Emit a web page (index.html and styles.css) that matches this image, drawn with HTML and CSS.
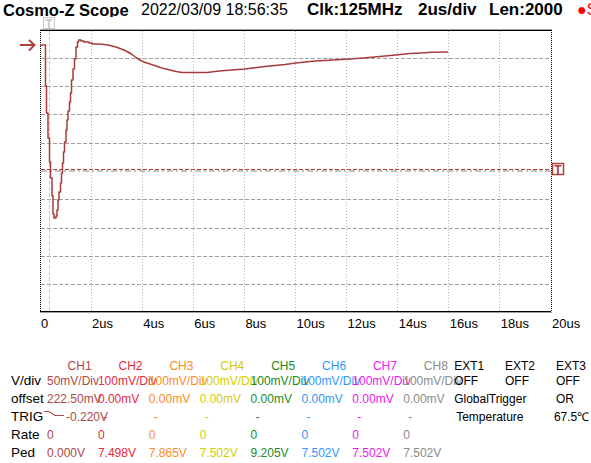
FILE: index.html
```html
<!DOCTYPE html>
<html lang="en">
<head>
  <meta charset="UTF-8">
  <title>Cosmo-Z Scope</title>
  <link rel="stylesheet" href="styles.css">
</head>
<body>
  <div class="topbar">
    <span class="title">Cosmo-Z Scope</span>
    <span class="date">2022/03/09 18:56:35</span>
    <span class="info clk">Clk:125MHz</span>
    <span class="info per-div">2us/div</span>
    <span class="info len">Len:2000</span>
    <span class="state">●Stop</span>
  </div>

  <svg class="scope" width="591" height="299" viewBox="0 17 591 299">
    <rect x="0" y="17" width="591" height="299" fill="#fff"/>

    <!-- time grid -->
    <g stroke="#b4b4b4" stroke-dasharray="1 2">
      <line x1="91.5" y1="31" x2="91.5" y2="311"/>
      <line x1="142.5" y1="31" x2="142.5" y2="311"/>
      <line x1="193.5" y1="31" x2="193.5" y2="311"/>
      <line x1="244.5" y1="31" x2="244.5" y2="311"/>
      <line x1="295.5" y1="31" x2="295.5" y2="311"/>
      <line x1="346.5" y1="31" x2="346.5" y2="311"/>
      <line x1="397.5" y1="31" x2="397.5" y2="311"/>
      <line x1="448.5" y1="31" x2="448.5" y2="311"/>
      <line x1="499.5" y1="31" x2="499.5" y2="311"/>
    </g>

    <!-- volt grid -->
    <g stroke="#a0a0a0" stroke-dasharray="4 2">
      <line x1="41" y1="58.5" x2="551" y2="58.5"/>
      <line x1="41" y1="86.5" x2="551" y2="86.5"/>
      <line x1="41" y1="114.5" x2="551" y2="114.5"/>
      <line x1="41" y1="143.5" x2="551" y2="143.5"/>
      <line x1="41" y1="199.5" x2="551" y2="199.5"/>
      <line x1="41" y1="228.5" x2="551" y2="228.5"/>
      <line x1="41" y1="256.5" x2="551" y2="256.5"/>
      <line x1="41" y1="284.5" x2="551" y2="284.5"/>
    </g>
    <line x1="41" y1="171" x2="551" y2="171" stroke="#c4c4c4" stroke-width="2" stroke-dasharray="6 3 2 3"/>

    <!-- trigger position and level -->
    <line x1="49.5" y1="31" x2="49.5" y2="311" stroke="#c8c8c8" stroke-dasharray="4 2"/>
    <line x1="41" y1="169.5" x2="551" y2="169.5" stroke="#b04040" stroke-dasharray="4 2"/>

    <!-- frame -->
    <line x1="40" y1="29.5" x2="552" y2="29.5" stroke="#a0a0a0"/>
    <line x1="40" y1="30.5" x2="551" y2="30.5" stroke="#000"/>
    <line x1="40" y1="311.5" x2="551" y2="311.5" stroke="#000"/>
    <line x1="40" y1="312.5" x2="552" y2="312.5" stroke="#a0a0a0"/>
    <line x1="40.5" y1="30" x2="40.5" y2="312" stroke="#000" stroke-dasharray="1 1"/>
    <line x1="551.5" y1="30" x2="551.5" y2="312" stroke="#000" stroke-dasharray="1 1"/>

    <!-- markers -->
    <rect x="43.5" y="17.5" width="11" height="11" fill="#fff" stroke="#c8c8c8"/>
    <text x="49" y="27.5" class="mark mark-time">T</text>
    <rect x="552.5" y="163.5" width="11" height="11" fill="#fff" stroke="#b04040" stroke-width="1.5"/>
    <text x="558" y="173.5" class="mark mark-level">T</text>
    <path d="M20 45 H34 M29 40 L34.5 45 L29 50.5" fill="none" stroke="#b04040" stroke-width="2"/>

    <!-- CH1 trace -->
    <polyline fill="none" stroke="#a83c3c" stroke-width="1.5" stroke-linejoin="round"
      points="40,45 45.5,45 45.5,86 46.5,86 46.5,113 48,113 48,138 49.5,138 49.5,162 50.5,162 50.5,178 52,178 52,196 53,196 53,214 54,214 54,218 56,218 56,216 57,216 57,210 58,210 58,200 59,200 59,192 60.5,192 60.5,183 61.5,183 61.5,173 62.5,173 62.5,163 63.5,163 63.5,152 64.5,152 64.5,142 66,142 66,130 67,130 67,120 68,120 68,111 69.5,111 69.5,102 70.5,102 70.5,93 71.5,93 71.5,80 73,80 73,69 74.5,69 74.5,59 76,59 76,47 77.5,47 77.5,42 78.5,42 78.5,40 81,40 81,41 84,41 84,42 89,42 89,43 92,43 92,44 100,44 108,45 112,46 116,47 120,48.5 124,50 128,52 132,54.5 136,57.5 140,60 144,62 150,64 156,66 162,68 170,70 176,71.5 182,72.5 195,72.5 207,72.5 215,71.5 225,70.5 235,69.8 245,69 255,67.8 265,66.5 275,65.5 285,64.5 296,63 305,62 315,61 325,60.5 337,59.7 350,59 360,58.3 372,57.3 385,56 398,54.8 410,53.5 420,53 432,52.3 448,52"/>
  </svg>

  <div class="axis">
    <span>0</span>
    <span>2us</span>
    <span>4us</span>
    <span>6us</span>
    <span>8us</span>
    <span>10us</span>
    <span>12us</span>
    <span>14us</span>
    <span>16us</span>
    <span>18us</span>
    <span>20us</span>
  </div>

  <div class="channels">
    <div class="row head">
      <span></span>
      <span class="ch1">CH1</span>
      <span class="ch2">CH2</span>
      <span class="ch3">CH3</span>
      <span class="ch4">CH4</span>
      <span class="ch5">CH5</span>
      <span class="ch6">CH6</span>
      <span class="ch7">CH7</span>
      <span class="ch8">CH8</span>
      <span class="ext">EXT1</span>
      <span class="ext">EXT2</span>
      <span class="ext">EXT3</span>
    </div>
    <div class="row">
      <span class="label">V/div</span>
      <span class="ch1">50mV/Div</span>
      <span class="ch2">100mV/Div</span>
      <span class="ch3">100mV/Div</span>
      <span class="ch4">100mV/Div</span>
      <span class="ch5">100mV/Div</span>
      <span class="ch6">100mV/Div</span>
      <span class="ch7">100mV/Div</span>
      <span class="ch8">100mV/Div</span>
      <span>OFF</span>
      <span>OFF</span>
      <span>OFF</span>
    </div>
    <div class="row">
      <span class="label">offset</span>
      <span class="ch1">222.50mV</span>
      <span class="ch2">0.00mV</span>
      <span class="ch3">0.00mV</span>
      <span class="ch4">0.00mV</span>
      <span class="ch5">0.00mV</span>
      <span class="ch6">0.00mV</span>
      <span class="ch7">0.00mV</span>
      <span class="ch8">0.00mV</span>
      <span>GlobalTrigger</span>
      <span></span>
      <span>OR</span>
    </div>
    <div class="row">
      <span class="label">TRIG</span>
      <span class="ch1 trig"><svg class="slope" width="22" height="8" viewBox="0 0 22 8"><polyline points="0,1.5 5,1.5 11,5.5 20,5.5" fill="none" stroke="#b04848" stroke-width="1.2"/></svg>-0.220V</span>
      <span class="ch2 none">-</span>
      <span class="ch3 none">-</span>
      <span class="ch4 none">-</span>
      <span class="ch5 none">-</span>
      <span class="ch6 none">-</span>
      <span class="ch7 none">-</span>
      <span class="ch8 none">-</span>
      <span class="temp">Temperature</span>
      <span></span>
      <span class="temp-value">67.5℃</span>
    </div>
    <div class="row">
      <span class="label">Rate</span>
      <span class="ch1">0</span>
      <span class="ch2">0</span>
      <span class="ch3">0</span>
      <span class="ch4">0</span>
      <span class="ch5">0</span>
      <span class="ch6">0</span>
      <span class="ch7">0</span>
      <span class="ch8">0</span>
    </div>
    <div class="row">
      <span class="label">Ped</span>
      <span class="ch1">0.000V</span>
      <span class="ch2">7.498V</span>
      <span class="ch3">7.865V</span>
      <span class="ch4">7.502V</span>
      <span class="ch5">9.205V</span>
      <span class="ch6">7.502V</span>
      <span class="ch7">7.502V</span>
      <span class="ch8">7.502V</span>
    </div>
  </div>
</body>
</html>
```

FILE: styles.css
```css
body {
  margin: 0;
  width: 591px;
  height: 463px;
  overflow: hidden;
  background: #fff;
  color: #000;
  font-family: "Liberation Sans", Arial, sans-serif;
}

.topbar {
  display: flex;
  height: 14px;
  padding: 3px 0 0 3px;
  line-height: 14px;
  white-space: nowrap;
}

.topbar span {
  flex: none;
}

.title {
  width: 138px;
  font-size: 16.5px;
  font-weight: bold;
}

.date {
  width: 166px;
  font-size: 16px;
}

.info {
  font-size: 17px;
  font-weight: bold;
}

.clk {
  width: 111px;
}

.per-div {
  width: 71px;
}

.len {
  width: 88px;
}

.state {
  color: #f00;
  font-size: 16px;
}

.scope {
  display: block;
}

.mark {
  font-size: 12px;
  font-weight: bold;
  text-anchor: middle;
}

.mark-time {
  fill: #c8c8c8;
}

.mark-level {
  fill: #b04040;
}

.axis {
  display: grid;
  grid-template-columns: repeat(11, 51.1px);
  padding-left: 41px;
  height: 15px;
  line-height: 15px;
  font-size: 13px;
  white-space: nowrap;
}

.channels {
  margin-top: 29px;
  padding-left: 11px;
  font-size: 12px;
}

.row {
  display: grid;
  grid-template-columns: 36px repeat(11, 50.9px);
  height: 18px;
  line-height: 18px;
  white-space: nowrap;
}

.row.head {
  height: 12px;
  line-height: 12px;
}

.label {
  font-size: 13.5px;
  line-height: 17px;
}

.head span {
  padding-left: 20.6px;
}

.head span.ext,
.head span:first-child {
  padding-left: 0;
}

.trig {
  margin-left: -3px;
}

.slope {
  vertical-align: 3px;
}

.none {
  padding-left: 5px;
}

.temp {
  padding-left: 2px;
}

.temp-value {
  margin-left: -2px;
}

.ch1 { color: #b04848; }
.ch2 { color: #e8283c; }
.ch3 { color: #ff8a1c; }
.ch4 { color: #d4cc00; }
.ch5 { color: #1c8a1c; }
.ch6 { color: #3396ff; }
.ch7 { color: #ec18ec; }
.ch8 { color: #8c8c8c; }
```
